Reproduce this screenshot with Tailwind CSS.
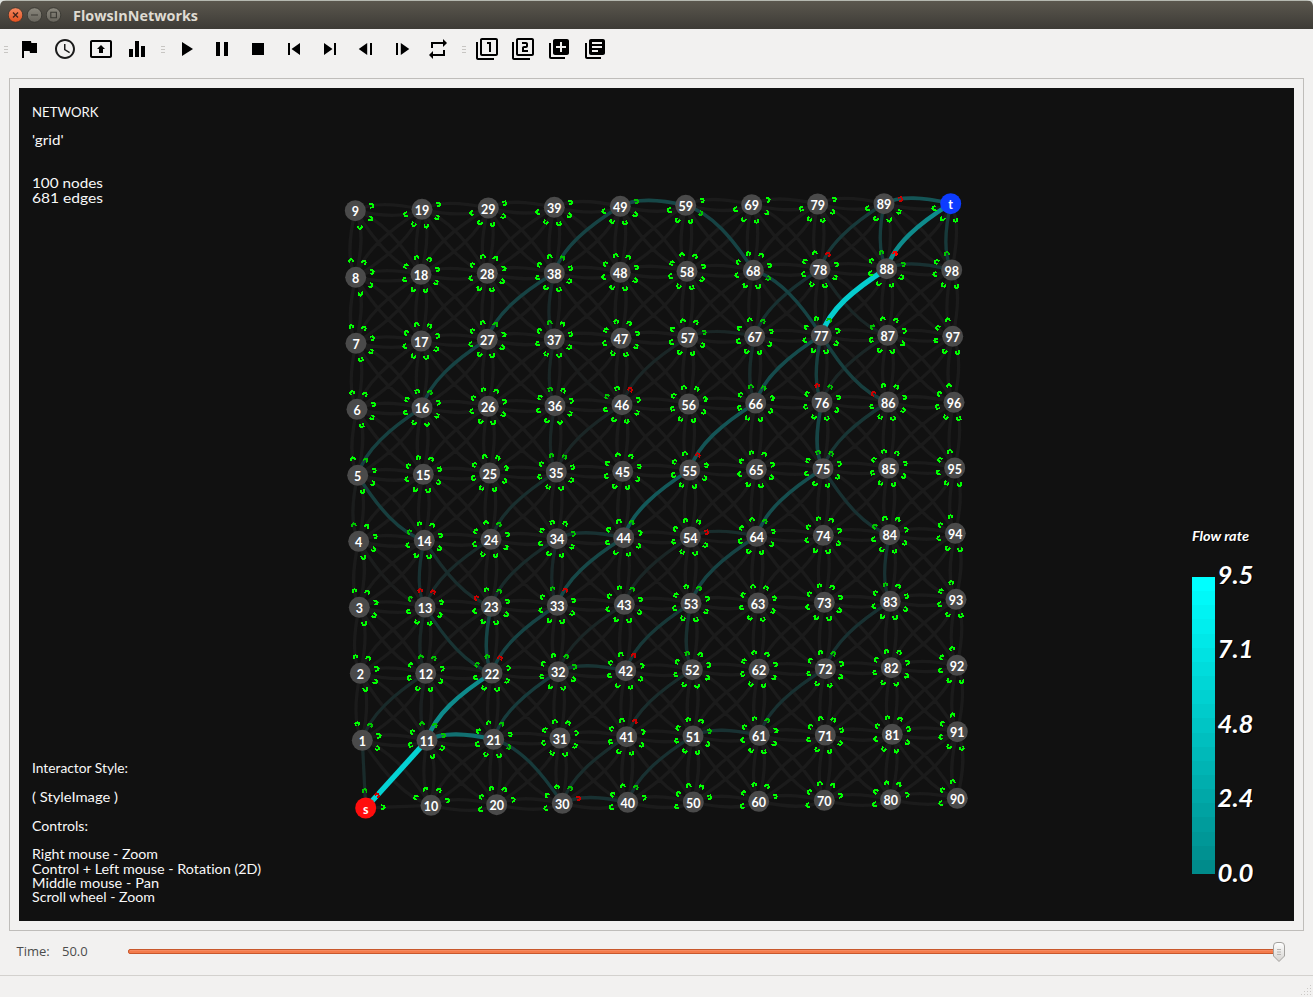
<!DOCTYPE html>
<html lang="en">
<head>
<meta charset="utf-8">
<title>FlowsInNetworks</title>
<script src="https://cdn.jsdelivr.net/npm/@tailwindcss/browser@4"></script>
</head>
<body class="bg-[#dfe3e0]">
<div class="w-[1313px] h-[997px] flex flex-col overflow-hidden bg-[#f2f1f0] rounded-t-md font-['Open_Sans',sans-serif]">
  <header class="h-[29px] shrink-0 flex items-center pl-2 gap-[3px] border-t border-[#b5b8b0] bg-gradient-to-b from-[#5b574e] to-[#3d3b36]">
    <svg class="size-4" viewBox="0 0 16 16"><defs><linearGradient id="o" x2="0" y2="1"><stop stop-color="#f58a62"/><stop offset="1" stop-color="#e2501e"/></linearGradient></defs><circle cx="7.5" cy="8" r="7.3" fill="url(#o)" stroke="#34322d" stroke-width=".8"/><path d="M5 5.5l5 5m0-5l-5 5" stroke="#3f241b" stroke-width="1.3"/></svg>
    <svg class="size-4" viewBox="0 0 16 16"><defs><linearGradient id="g" x2="0" y2="1"><stop stop-color="#8b887e"/><stop offset="1" stop-color="#67645c"/></linearGradient></defs><circle cx="7.5" cy="8" r="7.3" fill="url(#g)" stroke="#34322d" stroke-width=".8"/><path d="M4 8h7" stroke="#3a3833" stroke-width="1.1"/></svg>
    <svg class="size-4" viewBox="0 0 16 16"><circle cx="7.5" cy="8" r="7.3" fill="url(#g)" stroke="#34322d" stroke-width=".8"/><path d="M4.8 5.2h5.6v5.6H4.8z" fill="none" stroke="#3a3833" stroke-width="1.1"/></svg>
    <svg class="w-[140px] h-7 ml-2" viewBox="0 0 140 28"><text x="0" y="19.5" textLength="125" lengthAdjust="spacingAndGlyphs" font-size="14" font-weight="700" fill="#dfdbd2">FlowsInNetworks</text></svg>
  </header>

  <nav class="h-[49px] shrink-0 flex items-start pt-2 pl-1">
    <div class="w-1 h-6 pt-[9px] flex flex-col gap-[2px]"><i class="h-px bg-[#c8c6c3]"></i><i class="h-px bg-[#c8c6c3]"></i><i class="h-px bg-[#c8c6c3]"></i></div>
    <div class="flex gap-3 ml-[9px]">
      <svg class="size-6" viewBox="0 0 24 24"><path d="M14.4 6L14 4H5v17h2v-7h5.6l.4 2h7V6z"/></svg>
      <svg class="size-6" viewBox="0 0 24 24"><path fill="#1c1c1c" d="M11.99 2C6.47 2 2 6.48 2 12s4.47 10 9.99 10C17.52 22 22 17.52 22 12S17.52 2 11.99 2zM12 20c-4.42 0-8-3.58-8-8s3.58-8 8-8 8 3.58 8 8-3.58 8-8 8zm.5-13H11v6l5.25 3.15.75-1.23-4.5-2.67z"/></svg>
      <svg class="size-6" viewBox="0 0 24 24"><path d="M21 3H3c-1.11 0-2 .89-2 2v14c0 1.11.89 2 2 2h18c1.11 0 2-.89 2-2V5c0-1.11-.89-2-2-2zm0 16.02H3V4.98h18v14.04zM10 12H8l4-4 4 4h-2v4h-4v-4z"/></svg>
      <svg class="size-6" viewBox="0 0 24 24"><path d="M10 20h4V4h-4v16zm-6 0h4v-8H4v8zM16 9v11h4V9h-4z"/></svg>
    </div>
    <div class="ml-3 w-1 h-6 pt-[9px] flex flex-col gap-[2px]"><i class="h-px bg-[#c8c6c3]"></i><i class="h-px bg-[#c8c6c3]"></i><i class="h-px bg-[#c8c6c3]"></i></div>
    <div class="flex gap-3 ml-[9px]">
      <svg class="size-6" viewBox="0 0 24 24"><path d="M8 5v14l11-7z"/></svg>
      <svg class="size-6" viewBox="0 0 24 24"><path d="M6 19h4V5H6v14zm8-14v14h4V5h-4z"/></svg>
      <svg class="size-6" viewBox="0 0 24 24"><path d="M6 6h12v12H6z"/></svg>
      <svg class="size-6" viewBox="0 0 24 24"><path d="M6 6h2v12H6zm3.500 6l8.500 6V6z"/></svg>
      <svg class="size-6" viewBox="0 0 24 24"><path d="M6 18l8.500-6L6 6v12zM16 6v12h2V6h-2z"/></svg>
      <svg class="size-6" viewBox="0 0 24 24"><path d="M16 6h2v12h-2zM4.700 12l8.500 6V6z"/></svg>
      <svg class="size-6" viewBox="0 0 24 24"><path d="M10.800 18l8.500-6-8.500-6zM6 6v12h2V6z"/></svg>
      <svg class="size-6" viewBox="0 0 24 24"><path d="M7 7h10v3l4-4-4-4v3H5v6h2V7zm10 10H7v-3l-4 4 4 4v-3h12v-6h-2v4z"/></svg>
    </div>
    <div class="ml-3 w-1 h-6 pt-[9px] flex flex-col gap-[2px]"><i class="h-px bg-[#c8c6c3]"></i><i class="h-px bg-[#c8c6c3]"></i><i class="h-px bg-[#c8c6c3]"></i></div>
    <div class="flex gap-3 ml-[9px]">
      <svg class="size-6" viewBox="0 0 24 24"><path d="M3 5H1v16c0 1.100.9 2 2 2h16v-2H3V5zm11 10h2V5h-4v2h2v8zm7-14H7c-1.100 0-2 .9-2 2v14c0 1.100.9 2 2 2h14c1.100 0 2-.9 2-2V3c0-1.100-.9-2-2-2zm0 16H7V3h14v14z"/></svg>
      <svg class="size-6" viewBox="0 0 24 24"><path d="M3 5H1v16c0 1.100.9 2 2 2h16v-2H3V5zm18-4H7c-1.100 0-2 .9-2 2v14c0 1.100.9 2 2 2h14c1.100 0 2-.9 2-2V3c0-1.100-.9-2-2-2zm0 16H7V3h14v14zm-4-4h-4v-2h2c1.100 0 2-.89 2-2V7c0-1.110-.9-2-2-2h-4v2h4v2h-2c-1.100 0-2 .89-2 2v4h6v-2z"/></svg>
      <svg class="size-6" viewBox="0 0 24 24"><path d="M4 6H2v14c0 1.100.9 2 2 2h14v-2H4V6zm16-4H8c-1.100 0-2 .9-2 2v12c0 1.100.9 2 2 2h12c1.100 0 2-.9 2-2V4c0-1.100-.9-2-2-2zm-1 9h-4v4h-2v-4H9V9h4V5h2v4h4v2z"/></svg>
      <svg class="size-6" viewBox="0 0 24 24"><path d="M4 6H2v14c0 1.100.9 2 2 2h14v-2H4V6zm16-4H8c-1.100 0-2 .9-2 2v12c0 1.100.9 2 2 2h12c1.100 0 2-.9 2-2V4c0-1.100-.9-2-2-2zm-1 9H9V9h10v2zm-4 4H9v-2h6v2zm4-8H9V5h10v2z"/></svg>
    </div>
  </nav>

  <main class="mx-[9px] h-[853px] shrink-0 border border-[#bfbdba] p-[9px]">
    <svg id="scene" class="block w-[1275px] h-[833px] bg-[#111111] font-['Lato',sans-serif] [font-variant-ligatures:none]" viewBox="19 88 1275 833"></svg>
  </main>

  <section class="h-[44px] shrink-0 flex items-center pl-[16.5px] text-[13px] text-[#4c4c4c]">
    <span class="w-[45.5px] pb-[2px]">Time:</span>
    <span class="w-[65px] pb-[2px]">50.0</span>
    <svg class="w-[1170px] h-[30px] shrink-0" viewBox="127 938 1170 30">
      <defs><linearGradient id="k" x2="0" y2="1"><stop stop-color="#fff"/><stop offset="1" stop-color="#d4d2cf"/></linearGradient></defs>
      <rect x="128.500" y="949.500" width="1150" height="4" rx="1.500" fill="#f47b4b" stroke="#c8582d"/>
      <path d="M130 950.500H1273" stroke="#f68a60"/>
      <path d="M1273.500 946q0-3.500 3.500-3.500h4q3.500 0 3.500 3.500v10l-5.500 5.500-5.500-5.500z" fill="url(#k)" stroke="#a3a19e"/>
      <path d="M1277 949.500h4m-4 2.500h4m-4 2.500h4" stroke="#b5b3b0"/>
    </svg>
  </section>
  <footer class="flex-1 border-t border-[#d3d1ce] flex justify-end items-end">
    <svg class="w-3 h-3 mr-px mb-px" viewBox="0 0 12 12" fill="#cbc9c6"><path d="M10 1h1v1h-1zM10 4h1v1h-1zM7 4h1v1H7zM10 7h1v1h-1zM7 7h1v1H7zM4 7h1v1H4zM10 10h1v1h-1zM7 10h1v1H7zM4 10h1v1H4zM1 10h1v1H1z"/></svg>
  </footer>
</div>
<script>
// Node centres, one line per column, from row 0 (bottom) to row 9 (top).
const P = [
 [365.7,808,362.3,740.3,360.3,673.3,359.3,607.3,358.7,541.3,357.7,475.3,357,409.3,356,343.3,355.7,277.3,355.3,210.7],
 [431,805.3,427,740.3,425.7,673.3,425,607,424.3,540.3,423.3,474.3,422,407.7,421.3,341,421,274.3,422,209.3],
 [496.7,804.7,493.7,739.3,492,673,491.3,606.3,491,539.3,489.7,473,488.3,406.3,487.3,339.3,487.3,273.3,488.3,208],
 [562.3,803.3,560,738,558.3,671.7,557.3,605.3,557,538.7,556.3,472,555,405.7,554.3,339,554.3,273,554.3,207.3],
 [627.7,802.3,626.7,736.7,625.7,670.7,624.3,604.3,623.7,537.7,622.7,471.3,622,404.7,621,338.3,620.3,272.3,620.3,206.3],
 [693.3,802,693,736,692.3,669.7,691,603.3,690.3,537,689.7,470,688.7,404,687.7,337.3,687,271.3,685.7,205.3],
 [758.7,801.3,759.3,735.3,759,669.3,758,603,756.7,536.3,756.3,469.3,755.7,403,754.7,336.3,753.3,270.3,751.7,204.7],
 [824.3,800.3,825.3,735,825.3,668.7,824.3,602.3,823.3,535.3,823,468.7,822,402,821.3,335.3,820,269.3,817.7,204],
 [890.7,799.7,892.3,734.3,891.3,667.7,890.3,601.3,889.7,534.7,888.7,468,888.3,402,887.7,335.3,886.7,268.7,884,203.7],
 [957.3,798.3,957.3,731.7,957,665.3,956,599.3,955.3,533.3,954.7,468,954,402.3,952.7,336.3,951.7,270,950.7,203.7]
];
// Loaded edges: from, to, flow as percent, 1 = congested.
const F = `0 11 82 1;0 1 7;11 22 50;11 21 38;11 12 2;1 12 7;22 33 18 1;22 23 19;22 13 11;33 44 20 1;33 34 6;44 55 28;55 66 26 1;66 77 22;66 67 7;
77 88 80;88 99 50 1;88 89 15;88 98 10;98 99 14;89 99 26 1;78 89 14 1;67 78 10;68 77 18;59 68 18;49 59 20;38 49 18;27 38 18;16 27 18;5 16 17;14 5 16;
37 38 6;36 37 5;35 36 5;35 46 5;46 57 5 1;46 37 1;24 35 9;57 67 5;21 30 14;21 32 15;32 42 11;32 43 5;42 53 13 1;43 54 5;53 64 18;52 53 9;54 64 8 1;
64 75 23;75 76 19;76 77 16 1;75 86 12;86 77 16 1;87 78 5;76 87 5;84 75 10;83 84 10;72 83 10;61 72 10;51 61 10;40 51 10;30 41 8;30 40 10 1;41 52 8 1;
23 34 7;34 44 10;23 14 8 1;13 14 10 1;13 24 7 1;12 13 5;12 23 1;13 4 1;4 5 1`;
const flow = {};
F.split(';').forEach(e => { const [a, b, v, r] = e.trim().split(/\s+/).map(Number); flow[a + '_' + b] = [v / 100, r]; });
const at = n => { const c = P[Math.floor(n / 10)], r = n % 10; return [c[2 * r], c[2 * r + 1]]; };
const f1 = v => v.toFixed(1);
let base = '', heads = '', nodes = '', labels = '';
const lit = [];
for (let a = 0; a < 100; a++) {
  const c = Math.floor(a / 10), r = a % 10, [x, y] = at(a);
  for (let dc = -1; dc < 2; dc++) for (let dr = -1; dr < 2; dr++) {
    const c2 = c + dc, r2 = r + dr, b = c2 * 10 + r2;
    if ((!dc && !dr) || c2 < 0 || c2 > 9 || r2 < 0 || r2 > 9 || b === 0) continue;
    const [x2, y2] = at(b), L = Math.hypot(x2 - x, y2 - y), ux = (x2 - x) / L, uy = (y2 - y) / L, k = a === 0 ? 0 : 1;
    const pt = (t, o) => [x + ux * L * t + uy * o * L * k, y + uy * L * t - ux * o * L * k];
    const p1 = pt(.25, .13), p2 = pt(.6, .095);
    const d = `M${f1(x)} ${f1(y)}C${f1(p1[0])} ${f1(p1[1])} ${f1(p2[0])} ${f1(p2[1])} ${x2} ${y2}`;
    base += d;
    const fl = flow[a + '_' + b];
    if (fl) {
      const v = fl[0], m = (p, q) => Math.round(p + (q - p) * v);
      lit.push([v, `<path d="${d}" stroke="rgb(${m(27, 0)},${m(27, 250)},${m(27, 252)})" stroke-width="${f1(2.9 + 3 * v)}"/>`]);
    }
    const th = Math.atan2(uy, ux) - .27 * k, ax = x + Math.cos(th) * 17, ay = y + Math.sin(th) * 17;
    const col = !fl ? '#00ff00' : fl[1] ? (fl[0] > .45 && a ? '#ff0000' : '#c80000') : '#00c400';
    heads += `<path transform="translate(${f1(ax)} ${f1(ay)}) rotate(${f1(th * 180 / Math.PI + 8)})" d="M-2-1.800H.8L1.800 0L.8 1.600L-1.600 1.800" stroke="${col}"/>`;
  }
  const fill = a === 0 ? '#ff0d0d' : a === 99 ? '#0d3cff' : '#4a4a4a';
  nodes += `<circle cx="${x}" cy="${y}" r="10.500" fill="${fill}"/>`;
  labels += `<text x="${f1(x)}" y="${f1(y + 5.500)}">${a === 0 ? 's' : a === 99 ? 't' : a}</text>`;
}
// Stronger flows lie over weaker ones.
const litPaths = lit.sort((p, q) => p[0] - q[0]).map(p => p[1]).join('');
let bar = '';
for (let i = 0; i < 21; i++) {
  const g = Math.round(255 - i * 116 / 20), y0 = 577 + Math.round(i * 297 / 21), y1 = 577 + Math.round((i + 1) * 297 / 21);
  bar += `<rect x="1192" y="${y0}" width="23" height="${y1 - y0}" fill="rgb(0,${g},${g})"/>`;
}
const T = [['NETWORK',117,66.5],["'grid'",145,31.5],['100 nodes',188,71],['681 edges',203,71],['Interactor Style:',773,96],['( StyleImage )',802,86],['Controls:',831,56],
  ['Right mouse - Zoom',859,126],['Control + Left mouse - Rotation (2D)',874,229],['Middle mouse - Pan',888,127],['Scroll wheel - Zoom',902,123]];
const info = T.map(([s, y, w]) => `<text x="32" y="${y}" textLength="${w}" lengthAdjust="spacingAndGlyphs">${s}</text>`).join('');
const N = [['9.5',584],['7.1',658],['4.8',732.5],['2.4',807],['0.0',881.5]];
const num = (o, c) => `<g fill="${c}" font-weight="700" font-style="italic"><text x="${1192 + o}" y="${541 + o}" font-size="13" textLength="57" lengthAdjust="spacingAndGlyphs">Flow rate</text>` +
  N.map(([s, y]) => `<text x="${1217.5 + o}" y="${y + o}" font-size="24.500" textLength="36" lengthAdjust="spacingAndGlyphs">${s}</text>`).join('') + '</g>';
document.getElementById('scene').innerHTML =
  `<g fill="none"><path d="${base}" stroke="#1b1b1b" stroke-width="3.300"/>${litPaths}<g stroke-width="1.900" shape-rendering="crispEdges">${heads}</g></g>` +
  `${nodes}<g font-size="12.500" font-weight="700" fill="#fff" text-anchor="middle">${labels}</g>` +
  `${bar}<g font-size="13.500" fill="#f8f8f8">${info}</g>${num(1, '#000')}${num(0, '#fff')}`;
</script>
</body>
</html>
